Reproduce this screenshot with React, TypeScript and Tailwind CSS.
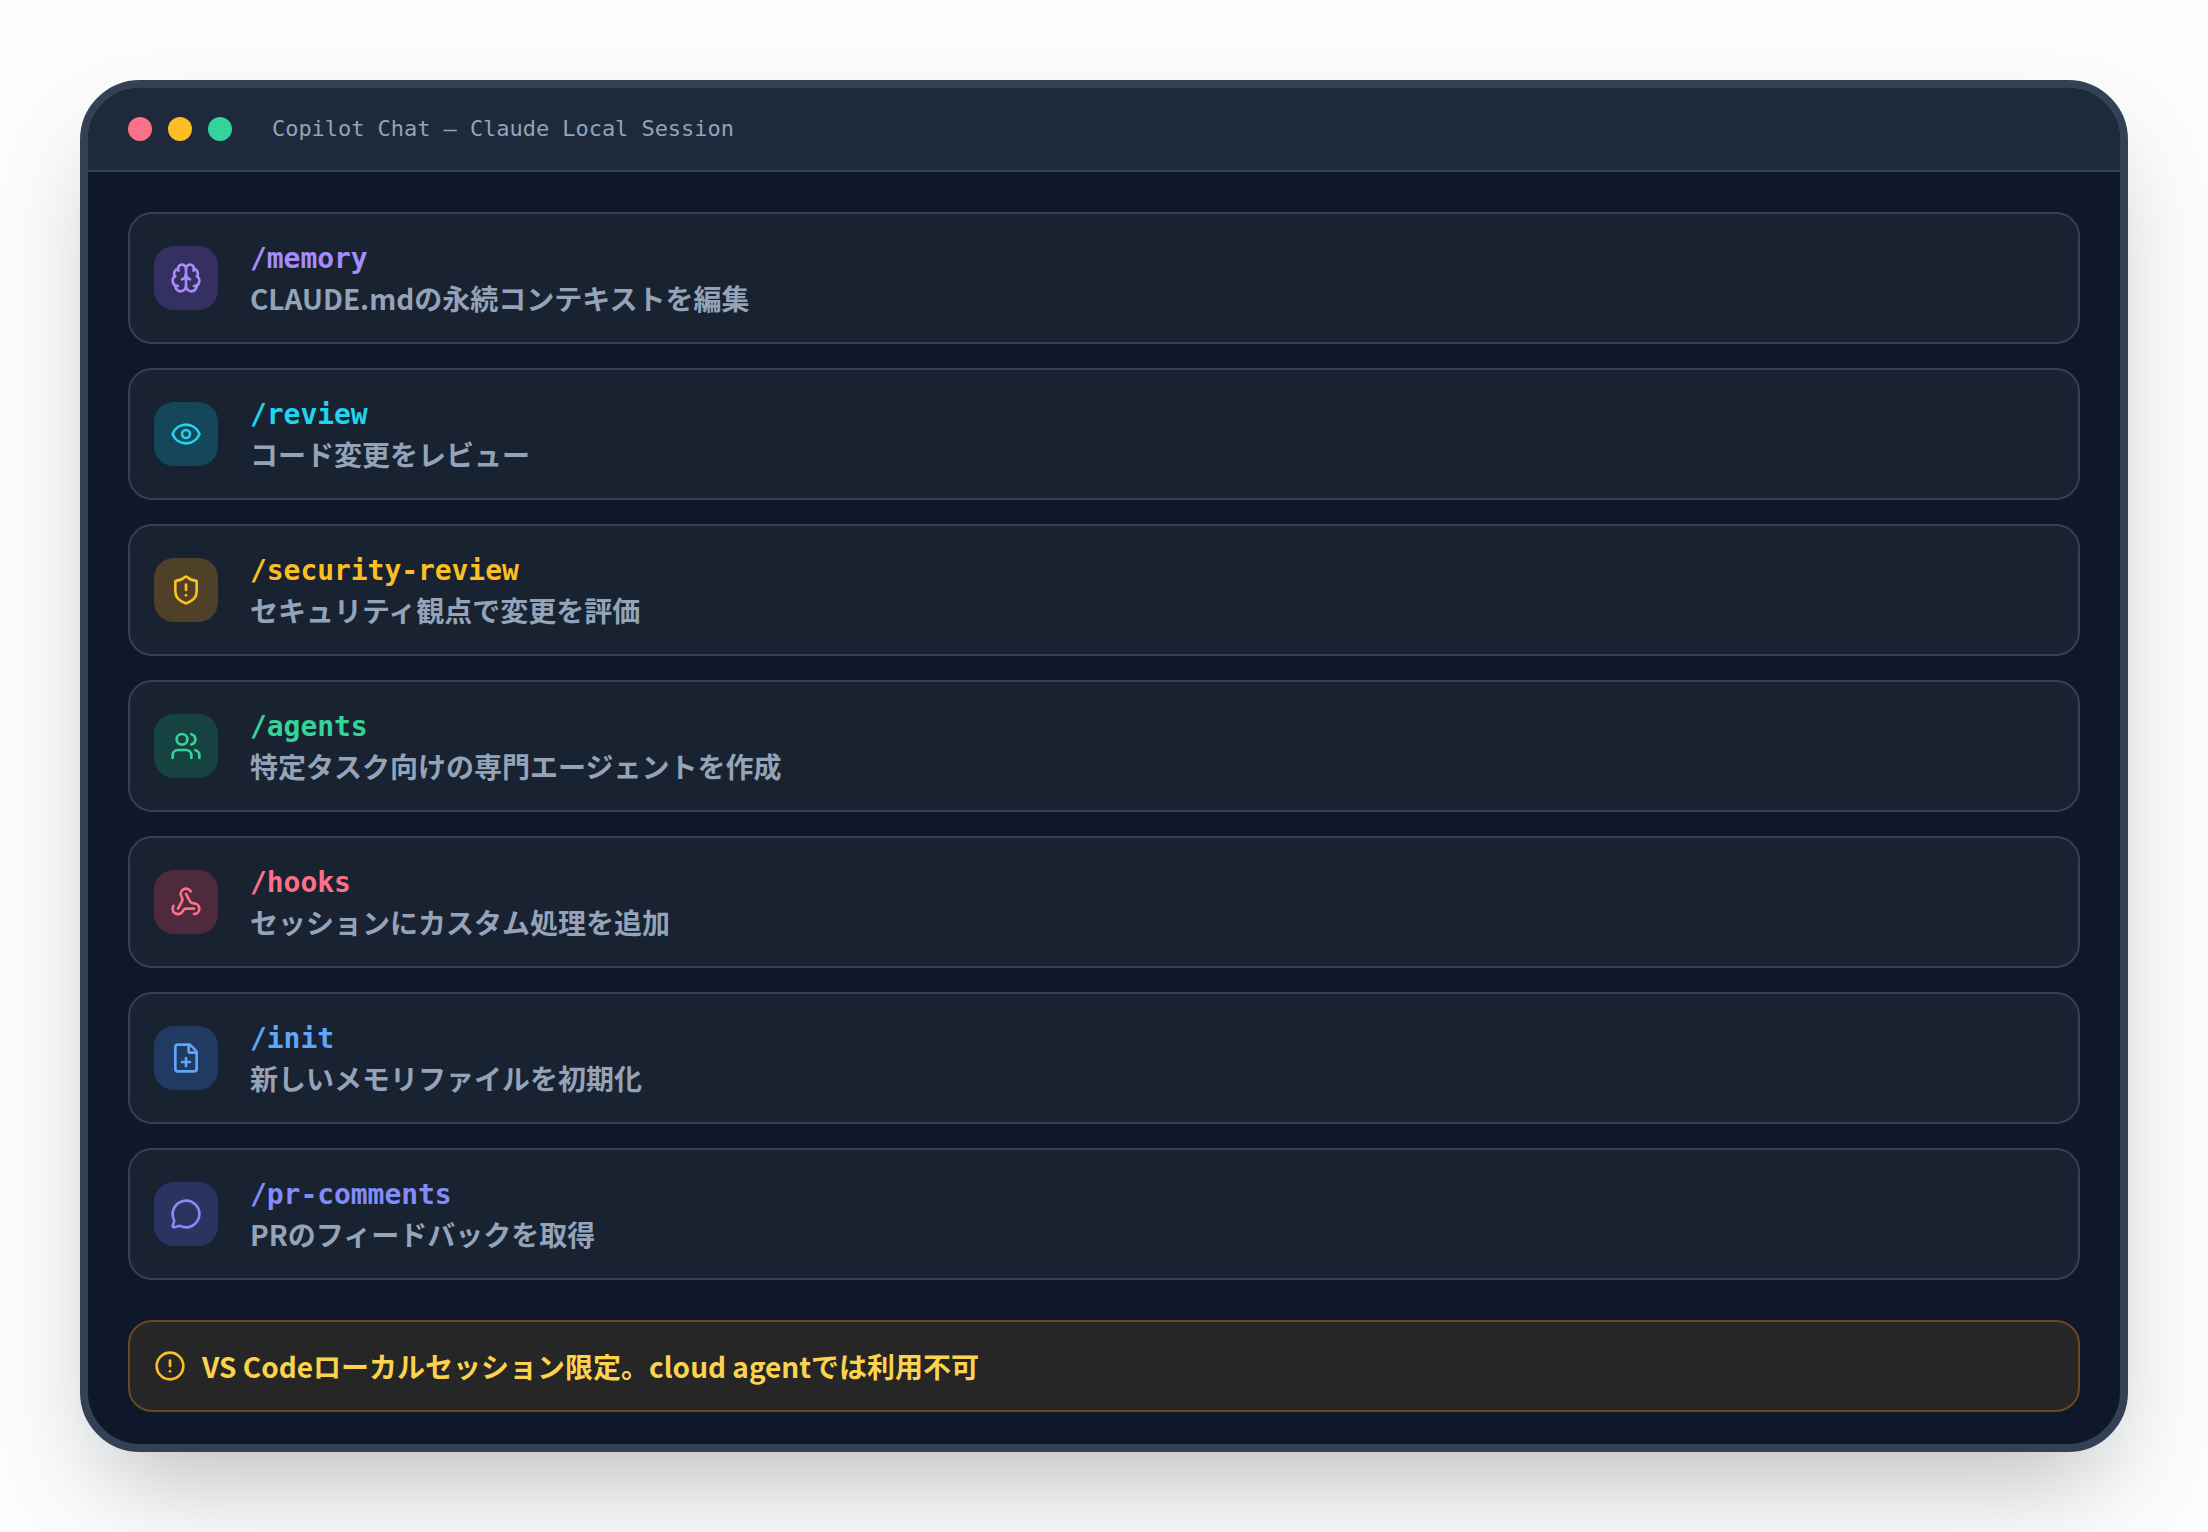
import { Brain, CircleAlert, Eye, FilePlus, MessageCircle, ShieldAlert, Users, Webhook } from 'lucide-react'
import type { LucideIcon } from 'lucide-react'

interface Command {
  name: string
  description: string
  icon: LucideIcon
  tile: string
  accent: string
}

const commands: Command[] = [
  { name: '/memory', description: 'CLAUDE.mdの永続コンテキストを編集', icon: Brain, tile: 'bg-[#8b5cf6]/25', accent: 'text-[#a78bfa]' },
  { name: '/review', description: 'コード変更をレビュー', icon: Eye, tile: 'bg-[#06b6d4]/25', accent: 'text-[#22d3ee]' },
  { name: '/security-review', description: 'セキュリティ観点で変更を評価', icon: ShieldAlert, tile: 'bg-[#f59e0b]/25', accent: 'text-[#fbbf24]' },
  { name: '/agents', description: '特定タスク向けの専門エージェントを作成', icon: Users, tile: 'bg-[#10b981]/22', accent: 'text-[#34d399]' },
  { name: '/hooks', description: 'セッションにカスタム処理を追加', icon: Webhook, tile: 'bg-[#f43f5e]/25', accent: 'text-[#fb7185]' },
  { name: '/init', description: '新しいメモリファイルを初期化', icon: FilePlus, tile: 'bg-[#3b82f6]/25', accent: 'text-[#60a5fa]' },
  { name: '/pr-comments', description: 'PRのフィードバックを取得', icon: MessageCircle, tile: 'bg-[#6366f1]/25', accent: 'text-[#818cf8]' },
]

function CommandCard({ name, description, icon: Icon, tile, accent }: Command) {
  return (
    <div className="flex h-[132px] items-center gap-8 rounded-3xl border-2 border-[#334155] bg-[#182230] px-6">
      <div className={`flex h-16 w-16 shrink-0 items-center justify-center rounded-[20px] ${tile}`}>
        <Icon size={32} className={accent} />
      </div>
      <div>
        <div className={`pt-0.5 font-['DejaVu_Sans_Mono',monospace] text-[28px] leading-[38px] font-bold tracking-[-0.06px] ${accent}`}>{name}</div>
        <div className="font-['Noto_Sans_CJK_JP',sans-serif] text-[28px] leading-10 font-bold text-[#94a3b8]">{description}</div>
      </div>
    </div>
  )
}

export default function App() {
  return (
    <div className="h-[1532px] w-[2208px] bg-[#fafcfe] p-20">
      <div className="h-[1372px] overflow-hidden rounded-[60px] border-8 border-[#334155] bg-[#0f172a] shadow-[0_50px_100px_-24px_rgba(0,0,0,0.25)]">
        <div className="flex h-[84px] items-center gap-4 border-b-2 border-[#334155] bg-[#1e293b] px-10">
          <span className="h-6 w-6 rounded-full bg-[#fb7185]" />
          <span className="h-6 w-6 rounded-full bg-[#fbbf24]" />
          <span className="h-6 w-6 rounded-full bg-[#34d399]" />
          <span className="mb-0.5 ml-6 font-['DejaVu_Sans_Mono',monospace] text-[22px] tracking-[-0.05px] text-[#94a3b8]">Copilot Chat — Claude Local Session</span>
        </div>
        <div className="flex flex-col gap-6 px-10 pt-10">
          {commands.map((command) => (
            <CommandCard key={command.name} {...command} />
          ))}
          <div className="mt-4 flex h-[92px] items-center gap-4 rounded-3xl border-2 border-[#664a22] bg-[#262626] px-6">
            <CircleAlert size={32} className="shrink-0 text-[#fbbf24]" />
            <span className="font-['Noto_Sans_CJK_JP',sans-serif] text-[28px] font-bold text-[#fcd34d]">VS Codeローカルセッション限定。cloud agentでは利用不可</span>
          </div>
        </div>
      </div>
    </div>
  )
}
